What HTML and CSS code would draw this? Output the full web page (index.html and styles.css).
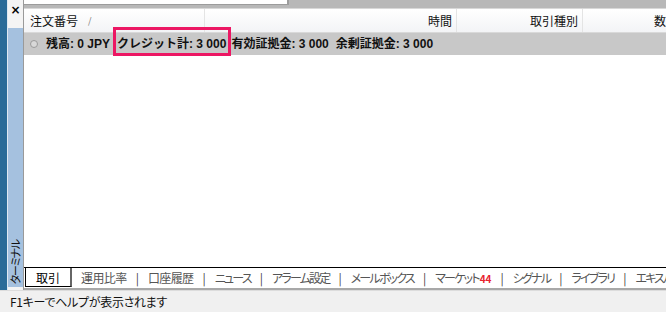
FILE: index.html
```html
<!DOCTYPE html>
<html lang="ja">
<head>
<meta charset="utf-8">
<link rel="stylesheet" href="styles.css">
</head>
<body>
<div class="app">
  <div class="main">
    <div class="edge"></div>
    <div class="edge-line"></div>
    <div class="side">
      <div class="side-top"><span class="close">×</span></div>
      <div class="side-bar"><span class="vtitle">ターミナル</span></div>
    </div>
    <div class="side-sep"></div>
    <div class="content">
      <div class="topbar"><div class="topbox"></div></div>
      <div class="header">
        <div class="col c1"><span>注文番号</span><span class="sort">/</span></div>
        <div class="col c2">時間</div>
        <div class="col c3">取引種別</div>
        <div class="col c4">数</div>
      </div>
      <div class="balance">
        <span class="dot"></span>
        <span class="item">残高: 0 JPY</span>
        <span class="item credit">クレジット計: 3 000<span class="mark"></span></span>
        <span class="item">有効証拠金: 3 000</span>
        <span class="item">余剰証拠金: 3 000</span>
      </div>
      <div class="fill"></div>
      <div class="tabs">
        <span class="tab active">取引</span>
        <span class="tab">運用比率</span><span class="bar">|</span>
        <span class="tab">口座履歴</span><span class="bar">|</span>
        <span class="tab kana">ニュース</span><span class="bar">|</span>
        <span class="tab kana">アラーム設定</span><span class="bar">|</span>
        <span class="tab kana">メールボックス</span><span class="bar">|</span>
        <span class="tab kana">マーケット<b class="badge">44</b></span><span class="bar">|</span>
        <span class="tab kana">シグナル</span><span class="bar">|</span>
        <span class="tab kana">ライブラリ</span><span class="bar">|</span>
        <span class="tab kana">エキスパート</span>
      </div>
    </div>
  </div>
  <div class="status">F1キーでヘルプが表示されます</div>
</div>
</body>
</html>
```
FILE: styles.css
```css
* { box-sizing: border-box; }
html, body { margin: 0; padding: 0; }
body {
  width: 666px;
  height: 312px;
  overflow: hidden;
  background: #f0f0f0;
  font-family: "Noto Sans CJK JP", "Liberation Sans", sans-serif;
  font-size: 12px;
  font-feature-settings: "palt";
  color: #000;
}
.app { display: flex; flex-direction: column; height: 312px; }
.main { display: flex; height: 290px; }
.edge { width: 7px; background: #2a6b98; }
.edge-line { width: 1px; background: #dfe9f2; }
.side { width: 15px; display: flex; flex-direction: column; background: #f4f4f4; }
.side-top { height: 28px; display: flex; justify-content: center; padding-top: 4px; }
.close { font-family: "DejaVu Sans", sans-serif; font-weight: bold; font-size: 12px; line-height: 12px; }
.side-bar {
  flex: 1;
  background: #a5c1df;
  display: flex;
  align-items: flex-end;
  justify-content: center;
  padding-bottom: 3px;
  margin-bottom: 3px;
}
.vtitle {
  writing-mode: vertical-rl;
  text-orientation: sideways;
  transform: rotate(180deg);
  font-size: 11px;
  line-height: 13px;
  letter-spacing: -1.2px;
  color: #111;
}
.side-sep { width: 1px; background: #9a9a9a; }
.content { flex: 1; display: flex; flex-direction: column; background: #fff; min-width: 0; position: relative; }
.topbar {
  height: 9px;
  background: #b8b8b8;
  border-bottom: 1px solid #d8d8d8;
  display: flex;
}
.topbox { width: 265px; height: 5px; background: #fff; border-right: 2px solid #9c9c9c; border-bottom: 1px solid #9c9c9c; }
.header {
  height: 24px;
  display: flex;
  background: linear-gradient(#ffffff, #f3f4f6);
  border-bottom: 1px solid #d9d9d9;
}
.col {
  height: 100%;
  display: flex;
  align-items: center;
  padding: 0 4px;
  border-right: 1px solid #e4e4e4;
  color: #111;
}
.c1 { width: 181px; padding-left: 6px; gap: 10px; }
.c2 { width: 252px; justify-content: flex-end; }
.c3 { width: 126px; justify-content: flex-end; }
.c4 { flex: 1; justify-content: flex-end; border-right: none; padding-right: 0; }
.sort { color: #777; font-size: 9px; }
.balance {
  height: 22px;
  background: #c8c8c8;
  display: flex;
  align-items: center;
  padding-left: 6px;
  font-family: "Liberation Sans", "Noto Sans CJK JP", sans-serif;
  font-size: 12px;
  font-weight: bold;
  font-feature-settings: normal;
  color: #111;
}
.dot {
  width: 8px; height: 8px; border-radius: 50%;
  border: 1px solid #9a9a9a;
  background: #d8d8d8;
  margin-right: 8px;
}
.item { margin-right: 7px; height: 16px; line-height: 16px; }
.credit { position: relative; margin-right: 5px; }
.mark {
  position: absolute;
  z-index: 5;
  left: -4px;
  right: -5px;
  top: -9px;
  height: 29px;
  border: 3px solid #ec1763;
}
.fill { flex: 1; }
.tabs {
  height: 23px;
  border-top: 1px solid #000;
  border-bottom: 2px solid #a8a8a8;
  display: flex;
  align-items: flex-start;
  padding-left: 1px;
  color: #555;
  white-space: nowrap;
  overflow: hidden;
  letter-spacing: -0.6px;
}
.tab { padding: 1px 9px 0; line-height: 18px; }
.tab.kana { letter-spacing: -1.8px; }
.tab.active {
  margin-top: -1px;
  background: #fff;
  border-left: 1px solid #000;
  border-right: 2px solid #666;
  border-bottom: 1px solid #000;
  padding: 2px 10px 0 10px;
  height: 20px;
  color: #000;
  margin-right: 0;
  letter-spacing: 0;
}
.bar { line-height: 19px; color: #444; letter-spacing: 0; }
.badge { color: #e8232f; font-size: 10px; font-weight: bold; margin-left: 1px; letter-spacing: 0; }
.status {
  height: 22px;
  background: #f0f0f0;
  border-top: 1px solid #dcdcdc;
  padding-left: 10px;
  display: flex;
  align-items: center;
  color: #111;
  letter-spacing: -0.3px;
}
```
